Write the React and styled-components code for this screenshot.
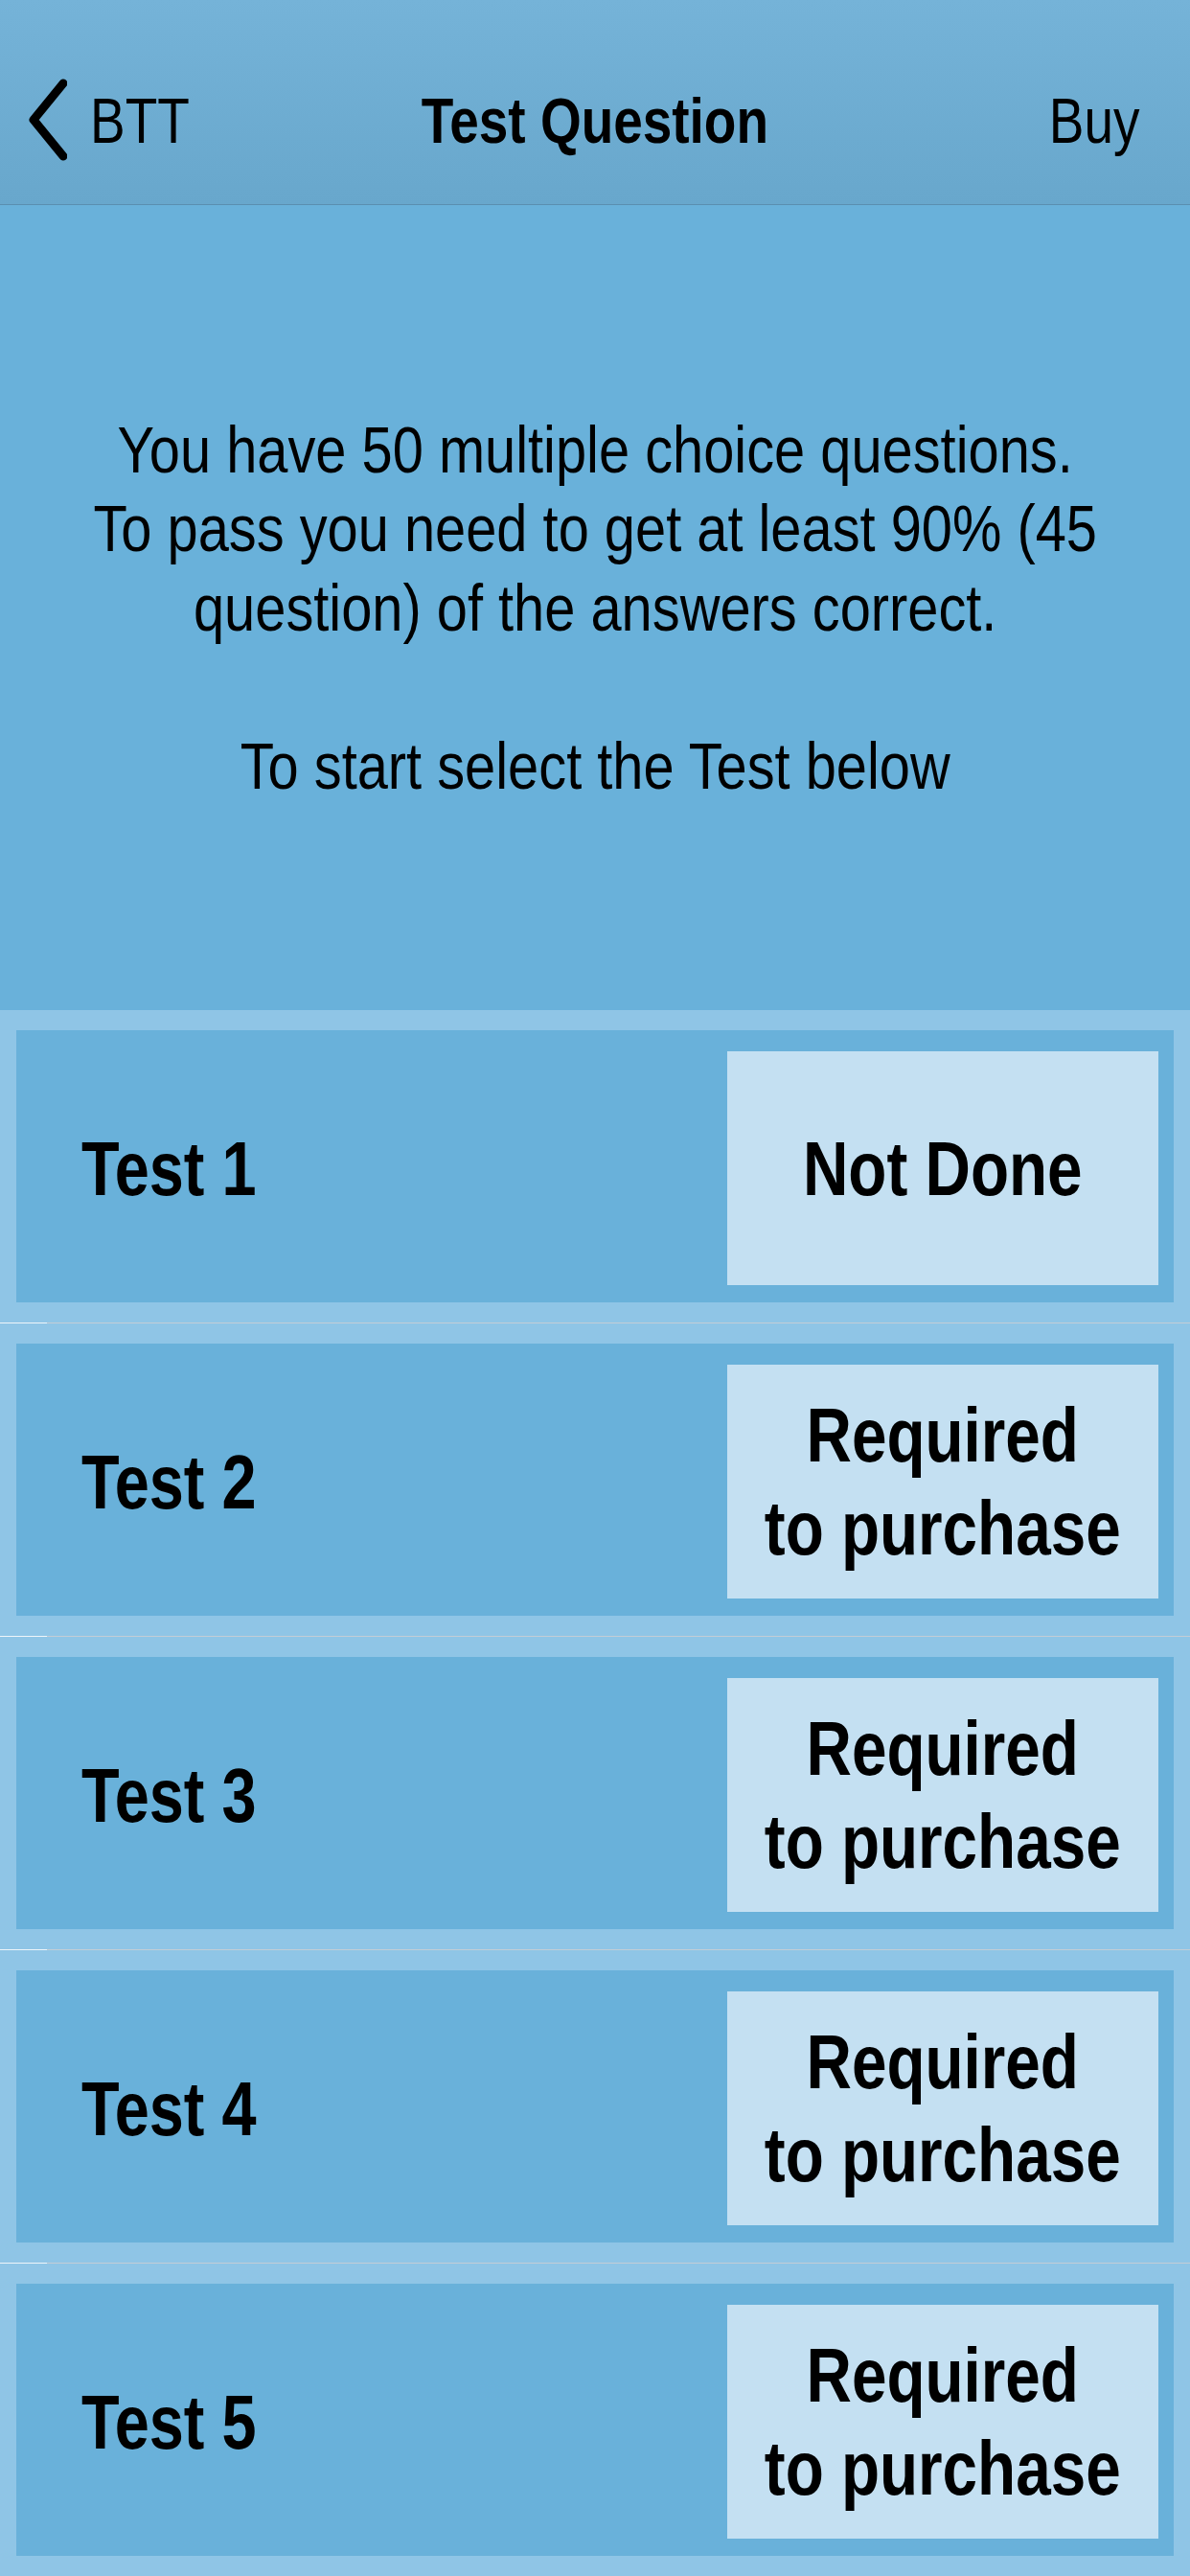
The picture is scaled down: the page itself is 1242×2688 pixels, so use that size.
import React from "react";
import styled, { createGlobalStyle } from "styled-components";

const Global = createGlobalStyle`
  html, body { margin: 0; padding: 0; }
  body {
    background: #8fc5e6;
    font-family: "Liberation Sans", Arial, sans-serif;
    color: #000;
  }
  * { box-sizing: border-box; }
`;

const Page = styled.div`
  width: 1242px;
  height: 2688px;
  overflow: hidden;
  display: flex;
  flex-direction: column;
  background: #8fc5e6;
`;

/* The app's system font is a narrow grotesque; Liberation Sans squeezed horizontally matches it */
const Narrow = styled.span`
  display: inline-block;
  white-space: pre;
  transform: scaleX(${(p) => p.$scale || 0.82});
  transform-origin: ${(p) => p.$origin || "center"};
`;

const NavBar = styled.header`
  height: 214px;
  padding: 82px 30px 46px 30px;
  background: linear-gradient(#75b3d8, #68a7cc);
  border-bottom: 1px solid #5a8fb0;
  display: grid;
  grid-template-columns: 1fr auto 1fr;
  align-items: center;
`;

const BackButton = styled.div`
  display: flex;
  align-items: center;
  gap: 24px;
  height: 86px;
  font-size: 67px;
  line-height: 1;
`;

const Title = styled.div`
  font-size: 67px;
  font-weight: 700;
  line-height: 1;
  display: flex;
  justify-content: center;
`;

const BuyButton = styled.div`
  justify-self: end;
  padding-right: 23px;
  font-size: 67px;
  line-height: 1;
`;

const Intro = styled.section`
  height: 843px;
  background: #69b1da;
  display: flex;
  align-items: center;
  justify-content: center;
  text-align: center;
`;

const IntroText = styled.p`
  margin: 0;
  font-size: 68px;
  line-height: 82.5px;
`;

const List = styled.div`
  display: flex;
  flex-direction: column;
`;

const Cell = styled.div`
  padding: 21px 17px;
  background: #8fc5e6;
`;

const Separator = styled.div`
  height: 1px;
  background: linear-gradient(to right, #eef5fa 0, #eef5fa 49px, #c3cdd6 49px);
`;

const Card = styled.div`
  height: 284px;
  background: #69b1da;
  display: flex;
  align-items: center;
  justify-content: space-between;
  padding: 22px 16px 18px 68px;
`;

const Label = styled.div`
  font-size: 79px;
  font-weight: 700;
  line-height: 1;
`;

const Status = styled.div`
  width: 450px;
  height: 244px;
  background: #c4e0f2;
  display: flex;
  align-items: center;
  justify-content: center;
  text-align: center;
  font-size: 80px;
  font-weight: 700;
  line-height: 97px;
`;

const Chevron = () => (
  <svg width="40" height="86" viewBox="0 0 40 86" fill="none">
    <polyline
      points="36,5 5,43 36,81"
      stroke="#000"
      strokeWidth="9"
      strokeLinecap="round"
      strokeLinejoin="round"
    />
  </svg>
);

const tests = [
  { name: "Test 1", status: "Not Done" },
  { name: "Test 2", status: "Required\nto purchase" },
  { name: "Test 3", status: "Required\nto purchase" },
  { name: "Test 4", status: "Required\nto purchase" },
  { name: "Test 5", status: "Required\nto purchase" },
];

const intro =
  "You have 50 multiple choice questions.\nTo pass you need to get at least 90% (45\nquestion) of the answers correct.\n\nTo start select the Test below";

export default function App() {
  return (
    <>
      <Global />
      <Page>
        <NavBar>
          <BackButton>
            <Chevron />
            <Narrow $origin="left center">BTT</Narrow>
          </BackButton>
          <Title>
            <Narrow>Test Question</Narrow>
          </Title>
          <BuyButton>
            <Narrow $origin="right center">Buy</Narrow>
          </BuyButton>
        </NavBar>
        <Intro>
          <IntroText>
            <Narrow $scale={0.85}>{intro}</Narrow>
          </IntroText>
        </Intro>
        <List>
          {tests.map((t, i) => (
            <React.Fragment key={t.name}>
              {i > 0 && <Separator />}
              <Cell>
                <Card>
                  <Label>
                    <Narrow $origin="left center">{t.name}</Narrow>
                  </Label>
                  <Status>
                    <Narrow>{t.status}</Narrow>
                  </Status>
                </Card>
              </Cell>
            </React.Fragment>
          ))}
        </List>
      </Page>
    </>
  );
}
